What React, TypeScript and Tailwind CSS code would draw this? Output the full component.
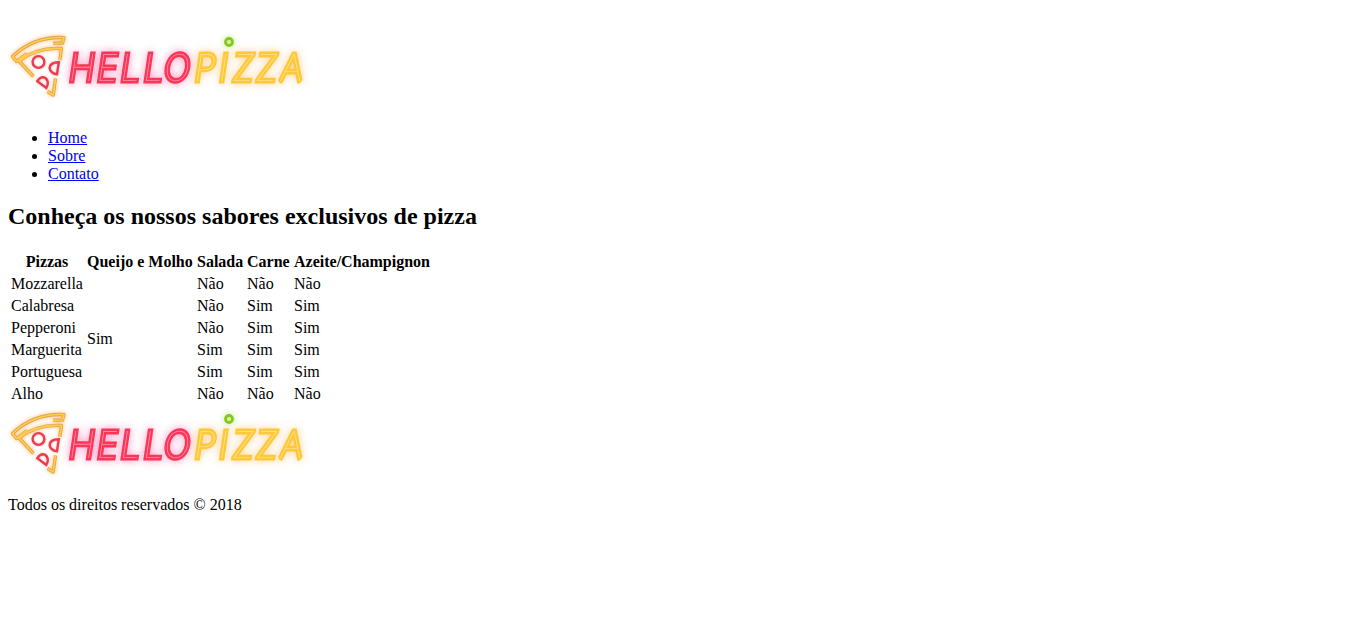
import React from "react";

function Slice() {
  return (
    <>
      <path d="M53 43.2 L62.5 43 L64 37.6 Q34 36 12.5 56.5 L16.5 61.5 L27 53.5" />
      <path d="M33.5 76.5 L19 61 Q37 47 61.5 48.5 L59.8 60" />
      <path d="M47.5 91.5 L53.2 95 L55.5 78.5" />
    </>
  );
}

function Toppings() {
  return (
    <>
      <circle cx="38.5" cy="62" r="5.9" />
      <path d="M58.8 62.3 Q50 62.5 49.6 68 Q50.5 73.5 57 74.2 Z" />
      <path d="M37.3 81.2 Q41 75.5 45.5 78 Q49.8 82 46.3 88 Z" />
    </>
  );
}

const font = "font-['Inter'] font-thin text-[37px]";

function Word({ x, children, base, core }: { x: number[]; children: string; base: string; core: string }) {
  const positions = x.map((v) => (v / 0.94).toFixed(2)).join(" ");
  return (
    <g transform="translate(0 81) skewX(-8.5) scale(0.94 1)">
      <text x={positions} y="0" className={font} fill={base} stroke={base} strokeWidth="5" strokeLinejoin="miter" strokeMiterlimit="1.5">{children}</text>
      <text x={positions} y="0" className={font} fill={core} stroke="none" aria-hidden="true">{children}</text>
    </g>
  );
}

function Logo() {
  return (
    <svg width="300" height="70" viewBox="8 29 300 70" className="block overflow-visible" fill="none">
      <g className="[filter:drop-shadow(0_0_2px_#ffc078)]" strokeLinejoin="round">
        <g stroke="#e3a052" strokeWidth="3.3"><Slice /></g>
        <g stroke="#ffd04a" strokeWidth="1.6"><Slice /></g>
      </g>
      <g stroke="#ef3a55" strokeWidth="2.4" className="[filter:drop-shadow(0_0_1px_#ffc0a0)]"><Toppings /></g>
      <g className="[filter:drop-shadow(0_0_4px_#ff8fc0)]">
        <Word x={[67.5, 95.5, 119, 142, 162.5]} base="#fb3657" core="#ff8fa8">HELLO</Word>
      </g>
      <g className="[filter:drop-shadow(0_0_4px_#ffcf92)]">
        <Word x={[193, 217.5, 231, 254.5, 279]} base="#fdc938" core="#ffe08a">PIZZA</Word>
      </g>
      <circle cx="229" cy="42" r="3.5" stroke="#8bc41f" strokeWidth="2.8" className="[filter:drop-shadow(0_0_3px_#a5ec62)]" />
    </svg>
  );
}

const rows = [
  ["Mozzarella", "Não", "Não", "Não"],
  ["Calabresa", "Não", "Sim", "Sim"],
  ["Pepperoni", "Não", "Sim", "Sim"],
  ["Marguerita", "Sim", "Sim", "Sim"],
  ["Portuguesa", "Sim", "Sim", "Sim"],
  ["Alho", "Não", "Não", "Não"],
];

export default function App() {
  return (
    <div className="min-h-[625px] bg-white px-2 pt-[29px] font-['Liberation_Serif',serif] text-[16px] leading-[18px] text-black">
      <header>
        <h1 className="h-[100px]"><Logo /></h1>
        <ul className="list-disc pl-10">
          {["Home", "Sobre", "Contato"].map((label) => (
            <li key={label}>
              <a href="#" className="text-[#0000ee] underline">{label}</a>
            </li>
          ))}
        </ul>
      </header>
      <main>
        <h2 className="mt-5 mb-5 text-[24px] leading-[27px] font-bold">Conheça os nossos sabores exclusivos de pizza</h2>
        <table className="w-[425px] table-fixed border-separate border-spacing-[2px] text-left whitespace-nowrap [&_td]:p-px [&_th]:p-px">
          <thead>
            <tr>
              <th className="w-[74px] text-center">Pizzas</th>
              <th className="w-[108px]">Queijo e Molho</th>
              <th className="w-[48px]">Salada</th>
              <th className="w-[45px]">Carne</th>
              <th className="w-[138px]">Azeite/Champignon</th>
            </tr>
          </thead>
          <tbody>
            {rows.map(([name, salad, meat, oil], i) => (
              <tr key={name}>
                <td>{name}</td>
                {i === 0 && <td rowSpan={6} className="align-middle">Sim</td>}
                <td>{salad}</td>
                <td>{meat}</td>
                <td>{oil}</td>
              </tr>
            ))}
          </tbody>
        </table>
      </main>
      <footer>
        <Logo />
        <p className="mt-5">Todos os direitos reservados © 2018</p>
      </footer>
    </div>
  );
}
